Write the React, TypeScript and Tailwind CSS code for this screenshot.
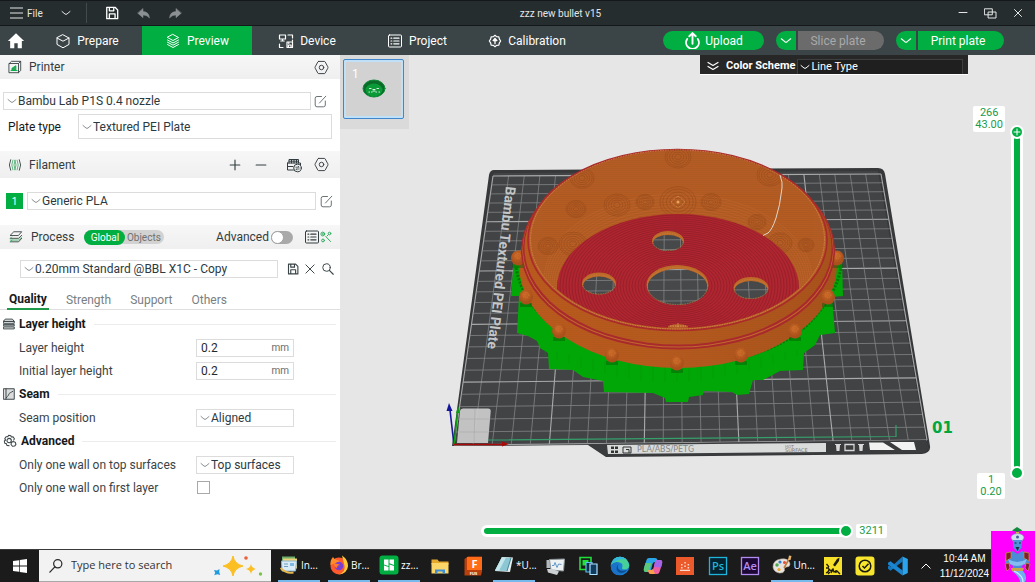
import React, { useState } from "react";

type Pt = [number, number];

/* ---------- small icons ---------- */

function Svg({ box = "0 0 16 16", className = "size-4", children }: { box?: string; className?: string; children: React.ReactNode }) {
  return (
    <svg viewBox={box} className={`shrink-0 ${className}`} fill="none" stroke="currentColor" strokeWidth={1} strokeLinecap="round" strokeLinejoin="round" aria-hidden="true">
      {children}
    </svg>
  );
}

const Chevron = ({ className = "w-2.5 h-1.5" }: { className?: string }) => (
  <Svg box="0 0 10 6" className={className}>
    <path d="M1 1.500 4 4q1 .7 2 0l3-2.500" />
  </Svg>
);

const Hex = () => (
  <Svg className="size-[15px]">
    <path d="M5 1.500h6q.7 0 1 .7l2.700 5q.4.800 0 1.600l-2.700 5q-.3.700-1 .7H5q-.7 0-1-.7l-2.700-5q-.4-.8 0-1.600l2.700-5q.3-.7 1-.7z" />
    <circle cx="8" cy="8" r="2.400" />
  </Svg>
);

const EditIcon = () => (
  <Svg box="0 0 13 13" className="size-[13px]">
    <path d="M7.500 1.500H3q-1.800 0-1.800 1.800V10q0 1.800 1.800 1.800h6.500q1.800 0 1.800-1.800V6M5.500 8l6.300-6.800" />
  </Svg>
);

const CubeIcon = () => (
  <Svg className="size-4">
    <path d="M8 1.800 14 5v6.400L8 14.800l-6-3.400V5zM2 5l6 3.200L14 5" />
  </Svg>
);

const LayersIcon = () => (
  <Svg className="size-4">
    <path d="m8 1.500 5.500 3L8 7.500l-5.500-3zM2.500 7 8 10l5.500-3M2.500 9.200l5.500 3 5.500-3M2.500 11.500l5.500 3 5.500-3" />
  </Svg>
);

const DeviceIcon = () => (
  <Svg className="size-4">
    <path d="M1.500 2h6v4h-6zM4.500 6v2M2.800 8h3.400M10 2h4.500v3M14.500 7v1M1.500 11v3.500H5M9 9h5.500v5.500H9zM10.500 14.500v-2.500h2.500v2.500M10.800 9v1.500" strokeWidth="1.200" />
  </Svg>
);

const ListIcon = ({ className = "size-4" }: { className?: string }) => (
  <Svg className={className}>
    <rect x="1.500" y="2" width="13" height="12" rx="1" />
    <path d="M4 5.200h.8M4 8h.8M4 10.800h.8M6.800 5.200H12M6.800 8H12M6.800 10.800H12" strokeWidth="1.200" />
  </Svg>
);

const CalibIcon = () => (
  <Svg className="size-3.5">
    <path d="M8 1.500 9.800 3l2.600.3.600 2.500L14.500 8 13 10.200l-.6 2.500-2.600.3L8 14.500 6.200 13l-2.600-.3-.6-2.500L1.500 8 3 5.800l.6-2.500L6.200 3z" strokeWidth="1.400" />
    <path d="M8 5v6M5.800 7.500 8 5l2.200 2.500z" strokeWidth="1.500" fill="currentColor" />
  </Svg>
);

const SaveIcon = ({ className }: { className: string }) => (
  <Svg className={className}>
    <path d="M2 1.500h9.500L14.500 4.500v10H2zM5 14.200V9h6.500v5.200M5 2v3.500h5V2" strokeWidth="1.500" />
  </Svg>
);

/* ---------- sidebar ---------- */

function Picker({ id, label, value, className }: { id: string; label?: string; value: string; className: string }) {
  return (
    <div className={`flex items-center border border-[#dcdcdc] bg-white pl-[3px] ${className}`}>
      <span className="flex text-[#8a8f92]"><Chevron /></span>
      <select id={id} aria-label={label} className="ml-px min-w-0 flex-1 appearance-none bg-transparent text-[12px] text-[#2c3a3f] outline-none">
        <option>{value}</option>
      </select>
    </div>
  );
}

function Bar({ children, className }: { children: React.ReactNode; className: string }) {
  return <div className={`flex items-center bg-linear-to-b from-[#f7f7f7] to-[#efefef] text-[#333d40] ${className}`}>{children}</div>;
}

function Section({ icon, title }: { icon: React.ReactNode; title: string }) {
  return (
    <div className="flex h-6 items-center gap-1 pr-1 pl-[3px]">
      {icon}
      <h3 className="text-[12px] font-bold text-[#16191a]">{title}</h3>
      <span className="ml-1 h-px flex-1 bg-[#ececec]" />
    </div>
  );
}

function Row({ id, label, children }: { id: string; label: string; children: React.ReactNode }) {
  return (
    <div className="flex h-[23px] items-center pl-[19px]">
      <label htmlFor={id} className="w-[177px] text-[12px] whitespace-nowrap">{label}</label>
      {children}
    </div>
  );
}

function MmInput({ id }: { id: string }) {
  return (
    <div className="flex h-[18px] w-[98px] items-center border border-[#dcdcdc] px-1">
      <input id={id} defaultValue="0.2" className="w-0 flex-1 bg-transparent text-[12px] text-[#1f2a2e] outline-none" />
      <span className="text-[10px] leading-4 text-[#6b6b6b]">mm</span>
    </div>
  );
}

function Sidebar() {
  return (
    <aside className="w-[340px] shrink-0 overflow-hidden bg-white text-[#3a4447]">
      <Bar className="h-6 pr-[11px] pl-2">
        <Svg className="size-3.5">
          <path d="M1.500 4 4 1.500h10.500V12L12 14.500M1.500 4H12v10.500H1.500zM12 4l2.500-2.500" />
          <path d="M3.500 12h7M4.500 11.500V9.500L9 6.500v5z" stroke="#00ae42" fill="#2fa35a" />
        </Svg>
        <h2 className="ml-[7px] flex-1 text-[12px]">Printer</h2>
        <button aria-label="Printer settings"><Hex /></button>
      </Bar>
      <div className="mt-[13px] flex items-center gap-[3px] pl-[3px]">
        <Picker id="printer" label="Printer" value="Bambu Lab P1S 0.4 nozzle" className="h-[18px] w-[308px]" />
        <button aria-label="Edit printer" className="text-[#6b7376]"><EditIcon /></button>
      </div>
      <div className="mt-1 flex items-center pr-2 pl-2">
        <label htmlFor="plate" className="w-[70px] text-[12px] text-[#16191a]">Plate type</label>
        <Picker id="plate" value="Textured PEI Plate" className="h-[25px] flex-1" />
      </div>

      <Bar className="mt-3 h-[27px] pr-[11px] pl-2">
        <Svg className="size-3.5">
          <path d="M3 2q-3 6 0 12M13 2q3 6 0 12" />
          <path d="M5.500 2.500q-2.500 5.500 0 11M8 2.500q-2.500 5.500 0 11M10.500 2.500q2.500 5.500 0 11M8 2.500q2.500 5.500 0 11" stroke="#4cae6f" />
        </Svg>
        <h2 className="ml-[7px] flex-1 text-[12px]">Filament</h2>
        <button aria-label="Add filament"><Svg className="size-3.5"><path d="M8 2.500v11M2.500 8h11" strokeWidth="1.300" /></Svg></button>
        <button aria-label="Remove filament" className="ml-3"><Svg className="size-3.5"><path d="M2.500 8h11" strokeWidth="1.400" /></Svg></button>
        <button aria-label="Sync filaments" className="ml-[18px]">
          <Svg className="size-4">
            <path d="M3 6V2.500h9.500V6M1.500 6h13v2M1.500 6v7h6M3 4.200h9M5.500 2.500V6M8 2.500V6M10.500 2.500V6M1.500 9.500h5.500" />
            <circle cx="11.500" cy="11" r="3.800" />
            <path d="M9.800 10.200h3.400l-1-1M13.200 12H9.800l1 1" strokeWidth=".8" />
          </Svg>
        </button>
        <button aria-label="Filament settings" className="ml-3"><Hex /></button>
      </Bar>
      <div className="mt-3.5 flex items-center pl-1.5">
        <span className="flex h-4 w-[17px] items-center justify-center bg-[#00ae42] text-[10px] text-white">1</span>
        <Picker id="filament" label="Filament" value="Generic PLA" className="ml-1 h-[18px] w-[289px]" />
        <button aria-label="Edit filament" className="ml-1 text-[#6b7376]"><EditIcon /></button>
      </div>

      <Bar className="mt-[15px] h-6 pr-2 pl-[9px]">
        <Svg className="size-3.5">
          <path d="m1.500 6 4-4h9l-3.500 4zM1.500 9.500H11L14.500 6M1.500 13.500H11l3.500-4" />
          <path d="M1.500 9.500 3 8M1.500 13.500l2-2M1.500 11.500H11l3.500-3.500" stroke="#3fae68" />
        </Svg>
        <h2 className="ml-2 text-[12px]">Process</h2>
        <div className="ml-2.5 flex h-[14px] items-center rounded-full bg-[#d2d2d2] text-[10px] text-[#6f6f6f]">
          <button className="h-[15px] w-[41px] rounded-full bg-[#00ae42] text-white">Global</button>
          <button className="w-[39px] pr-0.5">Objects</button>
        </div>
        <label htmlFor="adv" className="ml-auto text-[12px]">Advanced</label>
        <input id="adv" type="checkbox" className="ml-0.5 h-[13px] w-[22px] appearance-none rounded-full bg-[#a9a9a9] before:block before:size-[13px] before:rounded-full before:border before:border-[#a0a0a0] before:bg-white" />
        <button aria-label="Compare presets" className="ml-[11px]"><ListIcon className="size-4" /></button>
        <button aria-label="Tune" className="text-[#2fae60]">
          <Svg box="0 0 12 12" className="size-3">
            <circle cx="2.800" cy="3" r="1.900" /><circle cx="2.800" cy="3" r=".3" /><circle cx="9.500" cy="2.500" r="1.300" /><circle cx="3" cy="9.500" r="1.400" />
            <path d="M5.800 5.500 10.500 10.500M8.300 3.700 7 5" />
          </Svg>
        </button>
      </Bar>
      <div className="mt-[11px] flex items-center pl-5">
        <Picker id="preset" label="Process preset" value="0.20mm Standard @BBL X1C - Copy" className="h-[18px] w-[258px]" />
        <button aria-label="Save preset" className="ml-[9px]"><SaveIcon className="size-3" /></button>
        <button aria-label="Delete preset" className="ml-[5px]"><Svg className="size-3"><path d="m2.500 2.500 11 11M13.500 2.500l-11 11" strokeWidth="1.300" /></Svg></button>
        <button aria-label="Search settings" className="ml-1.5"><Svg className="size-3"><circle cx="6" cy="6" r="5" strokeWidth="1.300" /><path d="m9.800 9.800 5.200 5.200" strokeWidth="1.500" /></Svg></button>
      </div>
      <nav className="mt-3 flex h-5 gap-[17px] border-b border-[#dedede] pl-[7px] text-[12px] text-[#7a7f82]">
        <button className="h-5 border-b-2 border-[#1f9a4b] px-0.5 font-bold text-[#16191a]">Quality</button>
        <button>Strength</button>
        <button className="px-0.5">Support</button>
        <button>Others</button>
      </nav>
      <div className="mt-0.5">
        <Section title="Layer height" icon={<Svg className="size-3"><path d="M3.500 1.500h9l2.500 3H1zM1 4.500h14v2.500H1zM1 8.500h14v2H1zM1 12h14v2.500H1z" strokeWidth="1.300" /></Svg>} />
        <Row id="lh" label="Layer height"><MmInput id="lh" /></Row>
        <Row id="ilh" label="Initial layer height"><MmInput id="ilh" /></Row>
        <Section title="Seam" icon={<Svg className="size-3"><path d="M1 1h14v14H1zM4 1v14" strokeWidth="1.300" fill="#dcdcdc" /><path d="m4.500 13 2.500-3 1.500-3L14 4" strokeDasharray="2 1.500" strokeWidth="1.300" /></Svg>} />
        <Row id="seam" label="Seam position"><Picker id="seam" value="Aligned" className="h-[18px] w-[98px]" /></Row>
        <Section title="Advanced" icon={<Svg className="size-3.5"><path d="M6.500 1.500 9 2l.5 1.500 2-.3L13 5.500l-.8 1.500M6.500 1.500 5.500 3l-2 .2L2 5.500l1 1.500-1.500 1L2 10.500l1.800.5.700 2 2.500.5" strokeWidth="1.200" /><circle cx="7" cy="7.500" r="2.500" strokeWidth="1.200" /><path d="m11.500 8.500 2.500.8.800 2.500-1.500 2-2.500.2-1.600-2 .3-2.300z" strokeWidth="1.200" /></Svg>} />
        <Row id="wall" label="Only one wall on top surfaces"><Picker id="wall" value="Top surfaces" className="h-[18px] w-[98px]" /></Row>
        <Row id="first" label="Only one wall on first layer">
          <input id="first" type="checkbox" className="ml-px size-[13px] appearance-none border border-[#a8a8a8] bg-white" />
        </Row>
      </div>
    </aside>
  );
}

/* ---------- build plate and sliced model ---------- */

const CORNERS: Pt[] = [[454, 445], [927, 440], [881, 174], [493, 176]];

function project(u: number, v: number): Pt {
  const [[x0, y0], [x1, y1], [x2, y2], [x3, y3]] = CORNERS;
  const dx1 = x1 - x2, dx2 = x3 - x2, sx = x0 - x1 + x2 - x3;
  const dy1 = y1 - y2, dy2 = y3 - y2, sy = y0 - y1 + y2 - y3;
  const d = dx1 * dy2 - dx2 * dy1;
  const g = (sx * dy2 - dx2 * sy) / d;
  const h = (dx1 * sy - sx * dy1) / d;
  const w = g * u + h * v + 1;
  return [
    ((x1 - x0 + g * x1) * u + (x3 - x0 + h * x3) * v + x0) / w,
    ((y1 - y0 + g * y1) * u + (y3 - y0 + h * y3) * v + y0) / w,
  ];
}

function Grid() {
  const steps = Array.from({ length: 26 }, (_, i) => i);
  return (
    <g>
      {steps.map((i) => {
        const t = i / 25;
        const [ax, ay] = project(t, 0), [bx, by] = project(t, 1);
        const [cx, cy] = project(0, t), [ex, ey] = project(1, t);
        const bold = i % 5 === 0;
        return (
          <g key={i} stroke={bold ? "#a9abab" : "#858788"} strokeWidth={bold ? 1.1 : 0.75}>
            <line x1={ax} y1={ay} x2={bx} y2={by} />
            <line x1={cx} y1={cy} x2={ex} y2={ey} />
          </g>
        );
      })}
    </g>
  );
}

const BEADS: Pt[] = [[518, 258], [837, 258], [526, 297], [828, 297], [559, 331], [795, 331], [612, 355], [741, 355], [677, 363]];
const HOLES = [
  { cx: 668, cy: 241, rx: 16, ry: 10 },
  { cx: 599, cy: 283.5, rx: 17, ry: 11 },
  { cx: 677.5, cy: 285, rx: 31, ry: 20 },
  { cx: 751, cy: 288, rx: 17.5, ry: 11 },
];
const SPOTS: [number, number, number][] = [[678, 202, 18], [617, 205, 13], [645, 202, 9], [711, 202, 10], [576, 209, 10], [573, 244, 14], [548, 246, 10], [582, 178, 12], [678, 157, 13], [770, 175, 13], [757, 222, 9], [780, 243, 12], [806, 245, 8]];

const PLATE = "M494 170 878 168Q884 168 885 174L930 446Q931 453 922 454L606 457 588 445 452 446 489 175Q490 170 494 170Z";
const SUPPORT = "514,260 511,296 519,296 517,333 528,336 537,341 540,348 548,353 549,369 573,370 583,377 603,381 604,392 653,393 665,398 666,402 688,402 689,397 703,395 704,391 732,392 737,395 749,394 753,380 763,380 780,371 803,370 804,353 815,345 820,335 835,333 832,297 843,296 842,260";

function Scene() {
  return (
    <svg viewBox="340 55 695 494" className="absolute inset-0 h-full w-full" role="img" aria-label="Sliced model preview">
      <defs>
        <linearGradient id="wall" x1="0" x2="1">
          <stop offset="0" stopColor="#a5561f" /><stop offset=".3" stopColor="#b0601f" /><stop offset=".55" stopColor="#b86724" /><stop offset=".8" stopColor="#b05a1e" /><stop offset="1" stopColor="#a8541c" />
        </linearGradient>
        <linearGradient id="body" x1="0" x2="1">
          <stop offset="0" stopColor="#bb5a1d" /><stop offset=".5" stopColor="#b55a1e" /><stop offset="1" stopColor="#a9521b" />
        </linearGradient>
        <radialGradient id="bead" cx=".45" cy=".35">
          <stop offset="0" stopColor="#cd6b28" /><stop offset="1" stopColor="#a9501b" />
        </radialGradient>
        <pattern id="weave" width="3" height="2" patternUnits="userSpaceOnUse">
          <path d="M0 .5h3" stroke="#7c4418" strokeWidth=".5" opacity=".45" />
        </pattern>
        <clipPath id="opening"><ellipse cx="677.5" cy="239" rx="146" ry="89" /></clipPath>
        <clipPath id="floor"><ellipse cx="678" cy="288" rx="121" ry="74" /></clipPath>
        <clipPath id="holes">
          {HOLES.map((h) => <ellipse key={h.cx} cx={h.cx} cy={h.cy + 2} rx={h.rx - 1} ry={h.ry - 2} />)}
        </clipPath>
      </defs>

      <path d={PLATE} fill="#36383a" />
      <path d="M494 173 878 171 926 441 454 446 492 176Z" fill="#424345" />
      <Grid />
      <path d="m457 443 3-32q.3-2.500 3-2.500h25q3 0 2.700 3l-2.700 31.500z" fill="#c9c9c9" opacity=".95" />
      <path d="M475 409 474 443M459 432h30M460 419h30" stroke="#aaa" strokeWidth=".7" />
      <path d="M488 440 896 436.500V425" stroke="#35a06c" strokeWidth="1.200" fill="none" />
      <text transform="translate(506 186) rotate(96.5)" fontSize="14" fontWeight="700" fill="#c4c6c7" fontFamily="Roboto, sans-serif">Bambu Textured PEI Plate</text>

      <path d="M588 444 926 440 928 446Q929 451 922 453L606 456Z" fill="#3a3c3e" />
      <path d="M607 445 826 443V452L608 454Z" fill="#dadcdc" />
      <path d="M611 446.500h3v2.500h-3zM615 446.500h3v2.500h-3zM611 450.500h3v2.500h-3zM615 450.500h3v2.500h-3z" fill="#333" />
      <path d="M623 447h8v6h-8zM626 449.500h3v3.500" fill="none" stroke="#333" />
      <text x="637" y="452" fontSize="8" fill="#85898a" fontFamily="'DejaVu Sans', sans-serif">PLA/ABS/PETG</text>
      <text x="785" y="448" fontSize="4" fill="#777b7c" fontFamily="'DejaVu Sans', sans-serif">HOT</text>
      <text x="785" y="452" fontSize="5" fill="#777b7c" fontFamily="'DejaVu Sans', sans-serif">SURFACE</text>
      <path d="M835 444h6v1h-1l-.5 6h-3l-.5-6h-1zM858 444h6v1h-1l-.5 6h-3l-.5-6h-1z" fill="#d8d8d8" />
      <path d="M845 444.500h9v6h-9z" fill="none" stroke="#d8d8d8" strokeWidth="1.300" />
      <path d="M869 442.500h14l12 7.500h-25zM890 442h24l2 8h-14z" fill="#f2f2f2" />

      <polygon points={SUPPORT} fill="#00a706" />
      <g stroke="#01900a" strokeWidth=".6" opacity=".6">
        {Array.from({ length: 22 }, (_, i) => (
          <line key={i} x1={545 + i * 12} x2={545 + i * 12} y1={350 + Math.sin((i / 21) * Math.PI) * 16} y2={356 + Math.sin((i / 21) * Math.PI) * 26} />
        ))}
      </g>
      <path d="M516 268q6 30 30 52t70 38q62 14 124 0 48-12 72-38t29-52" fill="none" stroke="#075a08" strokeWidth="3" strokeDasharray="2 1.500" opacity=".6" />

      <ellipse cx="678" cy="265" rx="159" ry="103" fill="url(#body)" />
      <ellipse cx="678" cy="265" rx="159" ry="103" fill="url(#weave)" opacity=".4" />
      {BEADS.map(([x, y]) => (
        <g key={`${x}-${y}`}>
          <path d={`M${x - 6} ${y + 6}h12v4h-12z`} fill="#075a08" opacity=".45" />
          <ellipse cx={x} cy={y} rx="7" ry="7.500" fill="url(#bead)" />
          <ellipse cx={x} cy={y - 2} rx="3" ry="2.500" fill="none" stroke="#dd9145" strokeWidth=".5" strokeDasharray="1 1" />
        </g>
      ))}
      <ellipse cx="678" cy="251" rx="157" ry="98.500" fill="#a82a2c" />
      <ellipse cx="678" cy="250" rx="155.500" ry="97.500" fill="#c06a2c" />
      <ellipse cx="678" cy="249" rx="155" ry="97.500" fill="#a82a2c" />
      <ellipse cx="678" cy="247.500" rx="153.500" ry="97" fill="url(#body)" />
      <ellipse cx="678" cy="247.500" rx="153.500" ry="97" fill="url(#weave)" opacity=".4" />
      <ellipse cx="677.500" cy="240" rx="149.500" ry="90.500" fill="#b55c24" stroke="#a92b2b" strokeWidth="1.600" />
      <ellipse cx="677.500" cy="239.500" rx="147" ry="89.500" fill="none" stroke="#cf8a4a" strokeWidth=".9" strokeDasharray="1.500 1" />

      <g clipPath="url(#opening)">
        <rect x="525" y="145" width="305" height="190" fill="url(#wall)" />
        <rect x="525" y="145" width="305" height="190" fill="url(#weave)" opacity=".5" />
        <g fill="none" stroke="#d98b45" strokeWidth=".5" opacity=".3">
          {Array.from({ length: 7 }, (_, i) => (
            <ellipse key={i} cx="678" cy={286 - i} rx={122 + i * 2} ry={74 + i * 2} />
          ))}
        </g>
        {SPOTS.map(([x, y, r]) => (
          <g key={`${x}-${y}`} fill="none" stroke="#7d3a14" strokeWidth=".6" opacity=".5">
            {[0.25, 0.45, 0.65, 0.85, 1].map((k) => <ellipse key={k} cx={x} cy={y} rx={r * k} ry={r * k * 0.85} />)}
          </g>
        ))}
        <path d="m678 196 7 6-7 6-7-6z" fill="none" stroke="#e09a50" strokeWidth=".8" strokeDasharray="1 1" />
        <circle cx="678" cy="202" r="1.500" fill="#e7a65a" />
        <ellipse cx="678" cy="288" rx="121" ry="74" fill="#b02631" />
        <g clipPath="url(#floor)" fill="none" stroke="#7f1b25" strokeWidth=".7" opacity=".7">
          {Array.from({ length: 34 }, (_, i) => (
            <ellipse key={i} cx="678" cy="286" rx={22 + i * 3} ry={13 + i * 2} />
          ))}
        </g>
        <path d="M668 326q10-4 20 0v4h-20z" fill="#b65f28" />
        <path d="M670 326h16M678 323v6" stroke="#e3a25b" strokeWidth=".8" strokeDasharray="1.500 1" />
      </g>

      {HOLES.map((h) => <ellipse key={h.cx} {...h} fill="#bd6a28" />)}
      <g clipPath="url(#holes)">
        <rect x="570" y="225" width="210" height="90" fill="#46484a" />
        <Grid />
      </g>
      {HOLES.map((h) => <ellipse key={h.cx} cx={h.cx} cy={h.cy + 1} rx={h.rx - 1} ry={h.ry - 1.5} fill="none" stroke="#c98548" strokeWidth=".6" strokeDasharray="1.500 1" />)}
      <path d="M780 175q3 8 2 13-2 18-6 30t-8 15l-5 2.500" fill="none" stroke="#e3d6cb" strokeWidth="1" />

      <g strokeWidth="1.600" fill="none">
        <path d="M454 445 450 410" stroke="#16169c" /><path d="m449 403 3.500 8h-6z" fill="#16169c" />
        <path d="m454 445 3.500-32" stroke="#0a9d14" /><path d="m458 406 2 7h-4z" fill="#0a9d14" />
        <path d="M454 444.500h48" stroke="#a80a0a" /><path d="m509 444-7-2.500v5z" fill="#a80a0a" />
      </g>
      <text x="932" y="433" fontSize="15" fontWeight="700" fill="#00a63e" fontFamily="'DejaVu Sans', sans-serif">01</text>
    </svg>
  );
}

function Viewport() {
  const [top, setTop] = useState(266);
  const [low, setLow] = useState(1);
  const [step, setStep] = useState(3211);
  return (
    <main className="relative min-w-0 flex-1 overflow-hidden bg-[#e6e6e6]">
      <Scene />
      <div className="absolute top-0 left-0 h-[74px] w-[69px] bg-[#dadada] pt-1 pl-[3px]">
        <button aria-label="Plate 1" className="relative flex h-[60px] w-[61px] items-center justify-center rounded-xs border border-[#3f86cc] bg-[#d2d2d2] ring-2 ring-[#c0e0f8] ring-inset">
          <span className="absolute top-1.5 left-2 text-[12px] leading-4 text-white">1</span>
          <Svg box="0 0 24 20" className="h-5 w-6">
            <ellipse cx="12" cy="9.500" rx="11" ry="8.500" fill="#0b6b28" stroke="#128a3a" />
            <ellipse cx="12" cy="11" rx="8.500" ry="6.500" fill="#0a9a37" stroke="none" />
            <path d="M11 10.500h2M7.500 9.500h1.500M15 9.500h1.500M9.500 13h.5M14 13h.5M7 13h.5M17 13h.5M11 12h2" stroke="#d9f0de" strokeWidth="1.200" />
          </Svg>
        </button>
      </div>

      <div className="absolute top-0 right-[67px] flex h-5 w-[268px] items-start border-b border-white bg-[#272727] pl-[7px] text-white">
        <button aria-label="Expand legend" className="mt-1.5 mr-[7px]">
          <Svg box="0 0 12 10" className="h-2.5 w-3"><path d="m1 1.500 5 3 5-3M1 5.500l5 3 5-3" strokeWidth="1.200" /></Svg>
        </button>
        <label htmlFor="scheme" className="text-[11px] leading-[21px] font-bold">Color Scheme</label>
        <div className="mt-1 mr-[5px] ml-0.5 flex h-[15px] flex-1 items-center gap-px border border-b-0 border-[#3f3f3f] bg-[#1f1f1f] pl-0.5">
          <Chevron />
          <select id="scheme" className="min-w-0 flex-1 appearance-none bg-transparent text-[11px] leading-4 outline-none">
            <option>Line Type</option>
          </select>
        </div>
      </div>

      <div className="absolute top-[51px] right-[30px] rounded-xs bg-white px-0.5 py-px text-center text-[11px] leading-3 text-[#1b9b48]">
        <div>{top}</div>
        <div>{(top * 0.16165).toFixed(2)}</div>
      </div>
      <div className="absolute right-[30px] bottom-[50px] w-7 rounded-xs bg-white py-px text-center text-[11px] leading-3 text-[#1b9b48]">
        <div>{low}</div>
        <div>{(low * 0.2).toFixed(2)}</div>
      </div>
      <div className="absolute top-[70px] right-[11px] bottom-[69px] flex w-3.5 justify-center">
        <span className="my-1.5 w-3 rounded-full border-3 border-white bg-[#00ae42]" />
        <input type="range" aria-label="Top layer" min={1} max={266} value={top} onChange={(e) => setTop(+e.target.value)}
          className="pointer-events-none absolute inset-0 h-full w-3.5 appearance-none bg-transparent [direction:rtl] [writing-mode:vertical-lr] [&::-webkit-slider-thumb]:pointer-events-auto [&::-webkit-slider-thumb]:size-3.5 [&::-webkit-slider-thumb]:appearance-none [&::-webkit-slider-thumb]:rounded-full [&::-webkit-slider-thumb]:border-2 [&::-webkit-slider-thumb]:border-white [&::-webkit-slider-thumb]:bg-[#00ae42]" />
        <input type="range" aria-label="Bottom layer" min={1} max={266} value={low} onChange={(e) => setLow(+e.target.value)}
          className="pointer-events-none absolute inset-0 h-full w-3.5 appearance-none bg-transparent [direction:rtl] [writing-mode:vertical-lr] [&::-webkit-slider-thumb]:pointer-events-auto [&::-webkit-slider-thumb]:size-3.5 [&::-webkit-slider-thumb]:appearance-none [&::-webkit-slider-thumb]:rounded-full [&::-webkit-slider-thumb]:border-2 [&::-webkit-slider-thumb]:border-white [&::-webkit-slider-thumb]:bg-[#00ae42]" />
        <span className="pointer-events-none absolute top-0 size-3.5 text-white">
          <Svg box="0 0 14 14" className="size-3.5"><path d="M7 4v6M4 7h6" strokeWidth="1" /></Svg>
        </span>
      </div>

      <div className="absolute right-[148px] bottom-[11px] left-[141px] flex items-center gap-[3px]">
        <div className="relative h-3.5 min-w-0 flex-1">
          <span className="absolute inset-y-px right-1 left-0 rounded-full border-3 border-white bg-[#00ae42]" />
          <input type="range" aria-label="Move" min={1} max={3211} value={step} onChange={(e) => setStep(+e.target.value)}
            className="absolute inset-0 h-3.5 w-full appearance-none bg-transparent [&::-webkit-slider-thumb]:size-3.5 [&::-webkit-slider-thumb]:appearance-none [&::-webkit-slider-thumb]:rounded-full [&::-webkit-slider-thumb]:border-2 [&::-webkit-slider-thumb]:border-white [&::-webkit-slider-thumb]:bg-[#00ae42]" />
        </div>
        <output className="rounded-xs bg-white px-[3px] text-[11px] leading-[14px] text-[#1b9b48]">{step}</output>
      </div>
    </main>
  );
}

/* ---------- top bars ---------- */

function TitleBar() {
  return (
    <header className="relative flex h-[26px] shrink-0 items-center border-t border-b border-[#14181a] bg-[#262d2f] px-2.5 text-[10px] text-[#e4e6e6]">
      <button className="flex items-center gap-1">
        <Svg box="0 0 13 12" className="h-3 w-[13px]"><path d="M0 1h13M0 6h13M0 11h13" strokeWidth="1.200" /></Svg>
        File
      </button>
      <button aria-label="More menus" className="ml-[18px]"><Chevron /></button>
      <span className="ml-[15px] h-5 w-px bg-[#444b4e]" />
      <button aria-label="Save" className="ml-[18px] text-white"><SaveIcon className="size-3.5" /></button>
      <button aria-label="Undo" className="ml-[18px] text-[#8b9092]">
        <Svg box="0 0 13 11" className="h-[11px] w-[13px]"><path d="M6 .8v2.700q6 .2 6.500 6.500Q10 7 6 7v2.700L.8 5.200z" fill="currentColor" strokeWidth=".5" /></Svg>
      </button>
      <button aria-label="Redo" className="ml-[19px] text-[#8b9092]">
        <Svg box="0 0 13 11" className="h-[11px] w-[13px]"><path d="M7 .8v2.700Q1 3.700.5 10 3 7 7 7v2.700l5.200-4.500z" fill="currentColor" strokeWidth=".5" /></Svg>
      </button>
      <h1 className="pointer-events-none absolute inset-x-0 pl-[86px] text-center">zzz new bullet v15</h1>
      <div className="ml-auto flex items-center gap-4">
        <button aria-label="Minimize"><Svg box="0 0 10 10" className="size-2.5"><path d="M1 4.500h8" /></Svg></button>
        <button aria-label="Restore"><Svg box="0 0 13 11" className="h-[11px] w-[13px]"><path d="M.8.8h7.500v6H.8zM4.500 4h7.500v6H4.500z" /></Svg></button>
        <button aria-label="Close" className="pr-0.5"><Svg box="0 0 10 10" className="size-2.5"><path d="m1.500 1.500 7 7M8.500 1.500l-7 7" /></Svg></button>
      </div>
    </header>
  );
}

const TABS = [
  { name: "Prepare", icon: <CubeIcon /> },
  { name: "Preview", icon: <LayersIcon /> },
  { name: "Device", icon: <DeviceIcon /> },
  { name: "Project", icon: <ListIcon /> },
  { name: "Calibration", icon: <CalibIcon /> },
];

function NavBar() {
  return (
    <div className="flex h-[29px] shrink-0 items-center bg-[#3b4446] text-[12px] text-white">
      <button aria-label="Home" className="flex w-8 justify-center">
        <Svg className="size-[18px]"><path d="M8 1 .8 8h2v6.500h3.700V10h3v4.500h3.700V8h2z" fill="currentColor" stroke="none" /></Svg>
      </button>
      <nav className="flex h-full">
        {TABS.map((t) => (
          <button key={t.name} className={`flex h-full w-[110px] items-center justify-center gap-1.5 ${t.name === "Preview" ? "bg-[#00ae42]" : ""}`}>
            {t.icon}
            {t.name}
          </button>
        ))}
      </nav>
      <div className="ml-auto flex h-[19px] items-stretch pr-[31px]">
        <button className="flex w-[101px] items-center justify-center gap-1 rounded-full bg-[#00ae42]">
          <Svg className="size-[17px]"><path d="M8 11V1.500M5 4l3-3 3 3M3 6.500a6 6 0 1 0 10 0" strokeWidth="1.800" /></Svg>
          Upload
        </button>
        <button aria-label="Slice options" className="ml-3 flex w-5 items-center justify-center rounded-l-full bg-[#00ae42]"><Chevron className="h-[7px] w-3" /></button>
        <button disabled className="ml-0.5 w-[86px] rounded-r-full bg-[#6b6b6b] pr-1.5 text-[#a9a9a9]">Slice plate</button>
        <button aria-label="Print options" className="ml-3 flex w-5 items-center justify-center rounded-l-full bg-[#00ae42]"><Chevron className="h-[7px] w-3" /></button>
        <button className="ml-0.5 w-[86px] rounded-r-full bg-[#00ae42] pr-1.5">Print plate</button>
      </div>
    </div>
  );
}

/* ---------- taskbar ---------- */

function App16({ children }: { children: React.ReactNode }) {
  return <svg viewBox="0 0 20 20" className="size-5 shrink-0" aria-hidden="true">{children}</svg>;
}

const tile = (text: string, bg: string, fg: string) => (
  <App16>
    <rect x="1.500" y="1.500" width="17" height="17" fill={bg} stroke={fg} strokeWidth="1.300" />
    <text x="10" y="14" textAnchor="middle" fontSize="11" fontWeight="600" fill={fg} fontFamily="'Open Sans', sans-serif">{text}</text>
  </App16>
);

const APPS: { name: string; label?: string; icon: React.ReactNode }[] = [
  { name: "Inbox", label: "In...", icon: <App16><path d="M3 1.500h13v10H3z" fill="#6fae6a" /><path d="M4 3.500h14v10H4z" fill="#efd27a" /><path d="M2.500 6h15l-1 10H3z" fill="#d9ecf7" stroke="#8fb6cf" /><path d="M11 8h4v3h-4z" fill="#7fb8e0" /><path d="M5 9h4M5 11.500h4" stroke="#6f9dbd" /><path d="M1.500 13q6 6 13 4.500" fill="none" stroke="#e6b84d" strokeWidth="1.800" /></App16> },
  { name: "Browser", label: "Br...", icon: <App16><circle cx="10" cy="11" r="8.500" fill="#ff5a2c" /><path d="M13 .5q6 4 6 10.500a9 9 0 0 1-9 8.500q7-3 5.500-9T13 .5z" fill="#ffca3a" /><path d="M1.500 10Q1 5 4 2q1 2.500 4 3 2 0 3 2z" fill="#ff8b2b" /><circle cx="10" cy="11" r="4.300" fill="#7a3fd0" /><path d="M5 9q3-1 6 1-3 0-3 3-3-1-3-4z" fill="#ff7a2a" /></App16> },
  { name: "Bambu Studio", label: "zz...", icon: <App16><rect x=".5" y=".5" width="19" height="19" rx="3" fill="#00ae42" /><path d="M5 4.500h4.500V11L5 9.500zM10.500 4.500H15v5.500l-4.500-1.700zM5 10.500l4.500 1.600v3.400H5zM10.500 9.500 15 11v4.500h-4.500z" fill="#fff" /></App16> },
  { name: "Files", icon: <App16><path d="M1.500 3.500h6l1.500 2h9.500v3h-17z" fill="#e5a92f" /><path d="M1.500 7h17v10.500h-17z" fill="#f9d667" /><path d="M5 13.500h10v4h-2.500v-2h-5v2H5z" fill="#3f8fd6" /></App16> },
  { name: "Fusion", icon: <App16><path d="M1.500 3 5 .5h14v15l-1 4H1.500z" fill="#b93f0c" /><path d="M4 1h15v13H4z" fill="#ff6b16" /><text x="11.500" y="11.500" textAnchor="middle" fontSize="11" fontWeight="700" fill="#fff" fontFamily="'Open Sans', sans-serif">F</text><text x="10.500" y="18.500" textAnchor="middle" fontSize="4" fontWeight="700" fill="#fff" fontFamily="'Open Sans', sans-serif">FUS</text></App16> },
  { name: "Notepad", label: "*U...", icon: <App16><path d="m8 2 11 .5L16 17 1 16z" fill="#e9eef0" /><path d="m8 2 9 1-4 13-12-.5z" fill="#8cc7d3" /><path d="m8 2 4 .5L5 15.700l-4-.2z" fill="#c4e6ec" /><path d="m13 16 4-13" stroke="#3f8796" /></App16> },
  { name: "Monitor", icon: <App16><path d="M1.500 4h11v8h-11z" fill="#b4babd" /><path d="M4.500 3.500 19.500 3l-1 12L6 14z" fill="#eef1f2" stroke="#8f989c" /><path d="M7 9.500h2l1-3 2 5 1.500-3.500 3 .5" stroke="#3a83c4" fill="none" strokeWidth=".8" /><path d="M2 13h5l7 2.500-2 3.500-9-2.500z" fill="#ccd1d4" /></App16> },
  { name: "Remote", icon: <App16><path d="M2 1.500h11v12H2z" fill="none" stroke="#1fe03a" strokeWidth="1.600" /><path d="M4.500 4h6v5.500h-6z" fill="#1fe03a" /><path d="M8 6.500h6V16H8z" fill="#0e2a44" stroke="#5cc0f2" strokeWidth="1.200" /><path d="M12 8h7v10.500h-7z" fill="#123a5c" stroke="#a9e0ff" strokeWidth="1.200" /></App16> },
  { name: "Edge", icon: <App16><circle cx="10" cy="10" r="9.300" fill="#1c7fd6" /><path d="M.8 9Q3 .7 10 .7t9.300 8q0 4.800-5 4.800-3 0-2-2.500 1-4-3-4.500-5-.5-8.500 2.500z" fill="#47cf9a" /><path d="M.8 9Q3 .7 10 .7q4 0 6.500 2.500Q11 2.500 8 4 3.500 5.500.8 9z" fill="#35b8e0" /><path d="M.8 9q4-4 8.500-2.500Q6 8 6.500 12t6.500 5q-3 3-7.500 1.400T.8 9z" fill="#1a73c8" /><path d="M9.300 8q-2.500 2-.8 5t8.500 1q-2 3-5.500 3-5-.5-5-5Q7 8.500 9.300 8z" fill="#0c4e93" /></App16> },
  { name: "Copilot", icon: <App16><path d="M6 2h6q2 0 2.500 2l.5 2h-3q-2 0-2.500 2L8 14q-.6 2-2.500 2H3q-3 0-2-4L3.500 4Q4 2 6 2z" fill="#29a5e8" /><path d="M1 12 2.500 7h6L6 15.500Q5 16 3 16q-3 0-2-4z" fill="#5cc878" /><path d="M14 18H8q-2 0-2.500-2L5 14h3q2 0 2.500-2L12 6q.6-2 2.500-2H17q3 0 2 4l-2.500 8q-.5 2-2.500 2z" fill="#ef5fa0" /><path d="M14.500 4H17q3 0 2 4l-1 3.500-7-.5 1-5q.6-2 2.500-2z" fill="#a465ea" /><path d="M8 18q-2 0-2.500-2L5 14h3q1.500 0 2-1l2 5z" fill="#f7a24a" /></App16> },
  { name: "Grid", icon: <App16><rect x="1" y="1" width="18" height="18" fill="#ec5a2c" /><path d="M6 8h1.500v1.500H6zM9.300 6h1.500v1.500H9.300zM12.600 8h1.500v1.500h-1.500zM6 11h1.500v1.500H6zM9.300 9.500h1.500V11H9.300zM12.600 11h1.500v1.500h-1.500zM5 13.800h10V15H5z" fill="#fbd9cb" /></App16> },
  { name: "Photoshop", icon: tile("Ps", "#07222f", "#1fb4dc") },
  { name: "After Effects", icon: tile("Ae", "#1d0735", "#b08cf0") },
  { name: "Paint", label: "Un...", icon: <App16><path d="M9 4q8-1 9 5 0 3-3.500 3-3 .5-2 3.500-1 3-5 2.500-6-1-6.500-6Q1 5 9 4z" fill="#e8e3dc" stroke="#b8b0a6" strokeWidth=".6" /><circle cx="5" cy="10" r="1.700" fill="#4aa84e" /><circle cx="8" cy="7" r="1.600" fill="#2f7fd0" /><circle cx="12.500" cy="7.500" r="1.500" fill="#e04f3a" /><circle cx="7" cy="14.500" r="1.600" fill="#e8a62c" /><path d="M12 13 17 4" stroke="#b9793a" strokeWidth="1.600" /><path d="m16 5 1-4.500L19.500 1l-1 4z" fill="#e8b36e" /></App16> },
  { name: "Notes", icon: <App16><rect x="1" y="1" width="18" height="18" fill="#f7e02a" /><path d="m10 9 4-6 2.500-1.500L16 5l-4 5.500z" fill="#1d1a08" /><path d="M3 17q3-1 3-4l2 2 2-2 1 3 3-1 3 3M3.500 8l2.500 3M3 12h3M10 14l-2 3M13 14v3M5 18l2-2" stroke="#1d1a08" strokeWidth="1.300" fill="none" /></App16> },
  { name: "Tasks", icon: <App16><rect x=".5" y=".5" width="19" height="19" rx="3" fill="#f9e52e" /><circle cx="10" cy="10" r="5.800" fill="none" stroke="#1a1a12" strokeWidth="1.500" /><path d="m7.500 10 2 2 4-4.300" fill="none" stroke="#1a1a12" strokeWidth="1.500" /></App16> },
  { name: "Code", icon: <App16><path d="M14.500.5 3 11 1 9.500 0 10.500v2.200l2.500 2L14.500 5.500z" fill="#1478c0" /><path d="M14.500 19.500 0 8.500V6.800l2.500-1.500 12 9.200z" fill="#1a86d2" /><path d="M14.500.5 19.800 3v14l-5.300 2.500z" fill="#2ba4ee" /></App16> },
];

function Taskbar() {
  return (
    <footer className="flex h-[33px] shrink-0 items-stretch border-t border-[#3a3a3a] bg-[#1b1b1b] font-['Open_Sans',sans-serif] text-white">
      <button aria-label="Start" className="flex w-[39px] items-center justify-center">
        <Svg box="0 0 14 14" className="size-3.5"><path d="M0 2 6 1.200V6.600H0zM6.700 1.100 14 0v6.600H6.700zM0 7.400h6v5.400L0 12zM6.700 7.400H14V14l-7.300-1.100z" fill="#fff" stroke="none" /></Svg>
      </button>
      <div className="flex w-[232px] items-center border-b border-[#a8a8a8] bg-[#f2f2f2] pr-2 pl-2.5 text-[#2a2a2a]">
        <Svg className="mr-2 size-3.5"><circle cx="10" cy="5.500" r="4.700" strokeWidth="1.400" /><path d="M6.700 9 1 15" strokeWidth="1.500" /></Svg>
        <input aria-label="Search" placeholder="Type here to search" className="min-w-0 flex-1 bg-transparent text-[11px] outline-none placeholder:text-[#333]" />
        <svg viewBox="0 0 50 22" className="h-[22px] w-[50px]" aria-hidden="true">
          <path d="M20 1q1.500 8 10 10-8.500 2-10 10-1.500-8-10-10 8.500-2 10-10z" fill="#fbbf24" stroke="#fbbf24" strokeLinejoin="round" />
          <path d="M38 9q.6 4 5 5-4.400 1-5 5-.6-4-5-5 4.400-1 5-5z" fill="#fbbf24" />
          <circle cx="33" cy="3" r="1.800" fill="#e8613c" /><circle cx="47.500" cy="19" r="1.700" fill="#7cc24a" />
          <path d="m1 15 3 .5L6.500 14l-.3 3 1 3-3-.8-3 1 1-2.500z" fill="#1e9be0" />
        </svg>
      </div>
      <nav className="flex min-w-0 flex-1 pl-[3px]">
        {APPS.map((a) =>
          a.label ? (
            <button key={a.name} className="flex w-[50px] shrink-0 px-1">
              <span className="flex h-full w-full items-center gap-0.5 border-b-2 border-[#76b9ed] pl-px text-[10px]">{a.icon}{a.label}</span>
            </button>
          ) : (
            <button key={a.name} aria-label={a.name} className="flex min-w-0 flex-1 items-center justify-center">{a.icon}</button>
          ),
        )}
      </nav>
      <button aria-label="Show hidden icons" className="flex w-6 items-center justify-center">
        <Svg box="0 0 10 6" className="h-1.5 w-2.5"><path d="m.8 5.200 4.200-4.200 4.200 4.200" /></Svg>
      </button>
      <div className="mr-[44px] flex w-[53px] flex-col items-center justify-center font-['Liberation_Sans',sans-serif] text-[10px] leading-[15px] whitespace-nowrap">
        <span>10:44 AM</span>
        <span>11/12/2024</span>
      </div>
    </footer>
  );
}

function Genie() {
  return (
    <svg viewBox="0 0 44 55" className="absolute right-0 bottom-0 h-[55px] w-11" role="img" aria-label="Assistant">
      <rect y="4" width="44" height="51" fill="#ff00ff" />
      <path d="M21 3.500 26 0l5.500 3.500-5.500 1.500z" fill="#128a3e" />
      <path d="M25 5h3v4h-3z" fill="#d9b44a" />
      <path d="M20 11q0-4 6.500-4.500 6.500.5 6.500 4.500l-2 3h-9z" fill="#cfe0ee" stroke="#7d94ad" strokeWidth=".6" />
      <circle cx="26.500" cy="10" r="1.500" fill="#4a5f9a" />
      <path d="M22 13h9l-.5 8-4 4-4-4z" fill="#4f92da" />
      <path d="M23.500 16h2M28 16h2" stroke="#16233d" strokeWidth="1.200" /><path d="M24.500 20h4l-2 4z" fill="#1b2b4a" />
      <path d="m15 27 7-3 4.500 3 4.500-3 7 3 1 8-4 4-3-3-1 5h-9l-1-5-3 3-4-4z" fill="#4a8cd6" />
      <path d="m15 26 5-1v6l-5 3zM38 26l-5-1v6l5 3zM14 37l4-1 1 5-3 3zM39 37l-4-1-1 5 3 3z" fill="#7b1f35" stroke="#c99a3e" strokeWidth=".7" />
      <path d="M17 32q9 6 19 0l-2 5q-8 4-15 0z" fill="#86bdf0" />
      <path d="M20 41h13l-1 3H21z" fill="#c9a24a" />
      <path d="M21 44h11q5 5 2 11h-5q0-5-8-11z" fill="#6fb0ef" /><path d="M23 44q9 4 9 11" stroke="#cfe6fb" fill="none" strokeWidth="1.300" />
    </svg>
  );
}

export default function App() {
  return (
    <div className="relative flex h-screen flex-col overflow-hidden bg-[#e6e6e6] font-['Roboto','Noto_Sans',sans-serif] text-[12px]">
      <TitleBar />
      <NavBar />
      <div className="flex min-h-0 flex-1">
        <Sidebar />
        <Viewport />
      </div>
      <Taskbar />
      <Genie />
    </div>
  );
}
